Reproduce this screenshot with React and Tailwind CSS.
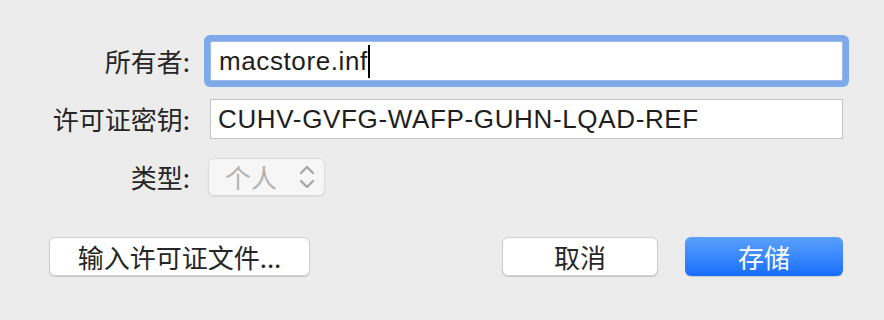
import React from "react";

const cjk = { fontFamily: '"Noto Sans CJK SC", "Liberation Sans", sans-serif' };
const latin = { fontFamily: '"Liberation Sans", "Noto Sans CJK SC", sans-serif' };

function Label({ children }) {
  return (
    <div
      className="flex items-center justify-end text-[26px] leading-none text-[#262626]"
      style={cjk}
    >
      {children}
    </div>
  );
}

export default function App() {
  return (
    <div className="w-[884px] h-[320px] bg-[#ececec] overflow-hidden">
      <div className="pt-[41px] grid grid-cols-[190px_633px] gap-x-[20px] gap-y-[18px]">
        <Label>所有者:</Label>
        <div className="h-[40px] bg-white border border-[#9dbbe9] rounded-[2px] shadow-[0_0_0_6px_#7ea9ea] flex items-center pl-[8px]">
          <span className="text-[26px] leading-none text-[#1e1e1e] tracking-[0.6px]" style={latin}>
            macstore.inf
          </span>
          <span className="w-[2px] h-[33px] bg-black ml-[0px]" />
        </div>

        <Label>许可证密钥:</Label>
        <div className="h-[40px] bg-white border border-[#c3c3c3] flex items-center pl-[7px]">
          <span className="text-[26px] leading-none text-[#1e1e1e] tracking-[0.65px]" style={latin}>
            CUHV-GVFG-WAFP-GUHN-LQAD-REF
          </span>
        </div>

        <Label>类型:</Label>
        <div className="flex mt-[1px] -ml-[2px]">
          <div className="w-[117px] h-[38px] bg-[#f6f6f6] border border-[#dcdcdc] rounded-[6px] shadow-[0_1px_1px_rgba(0,0,0,0.08)] flex items-center pl-[16px] pr-[8px]">
            <span className="text-[26px] leading-none text-[#b3b3b3]" style={cjk}>
              个人
            </span>
            <svg className="ml-auto" width="18" height="26" viewBox="0 0 18 26" fill="none">
              <path d="M3 9 L9 3 L15 9" stroke="#a8a8a8" strokeWidth="2.4" strokeLinecap="round" strokeLinejoin="round" />
              <path d="M3 17 L9 23 L15 17" stroke="#a8a8a8" strokeWidth="2.4" strokeLinecap="round" strokeLinejoin="round" />
            </svg>
          </div>
        </div>
      </div>

      <div className="flex items-start mt-[41px] pl-[49px]">
        <button
          className="w-[261px] h-[39px] bg-white border border-[#cfcfcf] rounded-[6px] shadow-[0_1px_1px_rgba(0,0,0,0.15)] text-[26px] leading-none text-[#262626] flex items-center justify-center"
          style={cjk}
        >
          输入许可证文件...
        </button>
        <button
          className="ml-[192px] w-[156px] h-[39px] bg-white border border-[#cfcfcf] rounded-[6px] shadow-[0_1px_1px_rgba(0,0,0,0.15)] text-[26px] leading-none text-[#262626] flex items-center justify-center"
          style={cjk}
        >
          取消
        </button>
        <button
          className="ml-[27px] w-[158px] h-[39px] rounded-[6px] bg-gradient-to-b from-[#5aa1fb] to-[#156dfb] shadow-[0_1px_1px_rgba(0,0,0,0.15)] text-[26px] leading-none text-white flex items-center justify-center"
          style={cjk}
        >
          存储
        </button>
      </div>
    </div>
  );
}
